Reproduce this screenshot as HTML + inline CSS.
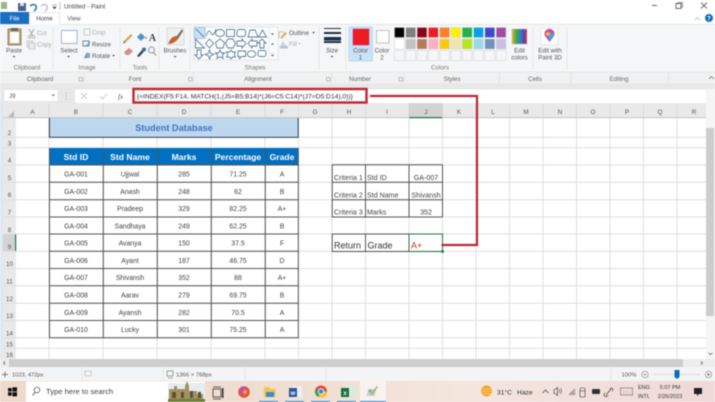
<!DOCTYPE html>
<html><head><meta charset="utf-8"><title>Untitled - Paint</title>
<style>
html,body{margin:0;padding:0;background:#fff;width:715px;height:402px;overflow:hidden}
svg{display:block;filter:blur(.4px)}
text{font-family:"Liberation Sans",sans-serif;fill:#555;font-size:6.200px}
.c{text-anchor:middle}
.h text,.h{font-size:6.300px;fill:#555;text-anchor:middle}
.d text{font-size:6.900px;fill:#444;text-anchor:middle}
.w text{font-size:8.600px;fill:#fff;font-weight:bold;text-anchor:middle}
.g line{stroke:#dedede;stroke-width:1}
.b line{stroke:#555;stroke-width:1}
.s *{fill:none;stroke:#5d7f9f;stroke-width:.9}
.k{fill:#444;font-size:7.100px}
</style></head><body>
<svg width="715" height="402" viewBox="0 0 715 402" xmlns="http://www.w3.org/2000/svg">
<rect width="715" height="402" fill="#fff"/>

<!-- title bar -->
<rect x="1" y="2" width="6" height="7" fill="#9ab88a"/>
<rect x="18" y="3" width="8" height="8" fill="#4a5f95"/><rect x="20" y="3" width="4" height="3" fill="#d8dfea"/>
<path d="M30 6 q4 -3 6 0 q1 3 -2 5" fill="none" stroke="#2f78b5" stroke-width="1.600"/>
<path d="M41 6 q4 -3 6 0 q1 3 -2 5" fill="none" stroke="#b8c3cc" stroke-width="1.400"/>
<path d="M52 5h5M52.500 7h4l-2 2z" fill="#444" stroke="#444" stroke-width=".4"/>
<line x1="60" y1="2" x2="60" y2="10" stroke="#999" stroke-width=".6"/>
<text x="64" y="8.500" style="font-size:6.300px;fill:#444">Untitled - Paint</text>
<line x1="652" y1="5.500" x2="657" y2="5.500" stroke="#444" stroke-width=".8"/>
<rect x="676" y="3.500" width="5" height="5" fill="none" stroke="#444" stroke-width=".8"/>
<path d="M678 3.500v-1h4.500v4.500h-1.500" fill="none" stroke="#444" stroke-width=".6"/>
<path d="M701 2.500l6 6M707 2.500l-6 6" stroke="#444" stroke-width=".8"/>
<path d="M695 20l2.500 -2.500l2.500 2.500" fill="none" stroke="#aaa" stroke-width=".7"/>
<circle cx="709" cy="18" r="4" fill="#0f6cbd"/><text x="709" y="20.300" class="c" style="font-size:6px;font-weight:bold;fill:#fff">?</text>

<!-- tabs -->
<rect x="0" y="12" width="29" height="12" fill="#1a6fc2"/>
<text x="14.500" y="20.500" class="c" style="fill:#fff;font-size:6.200px">File</text>
<text x="44.500" y="20.500" class="c" style="fill:#444;font-size:6.200px">Home</text>
<text x="74" y="20.500" class="c" style="fill:#555;font-size:6.200px">View</text>
<path d="M29.500 24V12.500H59.500V24" fill="none" stroke="#ddd" stroke-width=".7"/>

<!-- paint ribbon -->
<rect x="0" y="24" width="715" height="48" fill="#f5f6f7"/>
<line x1="0" y1="24.300" x2="29" y2="24.300" stroke="#ddd" stroke-width=".6"/><line x1="60" y1="24.300" x2="715" y2="24.300" stroke="#ddd" stroke-width=".6"/>
<g stroke="#e2e3e4" stroke-width=".8">
<line x1="53" y1="27" x2="53" y2="70"/><line x1="120" y1="27" x2="120" y2="70"/><line x1="159" y1="27" x2="159" y2="70"/><line x1="190" y1="27" x2="190" y2="70"/><line x1="319" y1="27" x2="319" y2="70"/><line x1="346" y1="27" x2="346" y2="70"/><line x1="533" y1="27" x2="533" y2="70"/><line x1="567" y1="27" x2="567" y2="70"/>
</g>
<!-- paste -->
<rect x="8" y="29" width="13" height="16" fill="#c8a878" stroke="#6e6252" stroke-width=".7"/>
<rect x="10" y="32" width="9" height="11" fill="#fff"/><rect x="11" y="28" width="7" height="3" fill="#666"/>
<text x="14" y="52.500" class="c">Paste</text><path d="M12.500 56h3l-1.500 1.500z" fill="#444"/>
<path d="M29 29l4 7M34 29l-4 7" stroke="#9aa" stroke-width=".9"/><circle cx="29.500" cy="37" r="1.300" fill="none" stroke="#9aa" stroke-width=".7"/><circle cx="33.500" cy="37" r="1.300" fill="none" stroke="#9aa" stroke-width=".7"/>
<text x="37" y="35" style="fill:#aaa">Cut</text>
<rect x="27" y="41" width="6" height="6" fill="#e8eaec" stroke="#b0b6bc" stroke-width=".6"/><rect x="29" y="43" width="6" height="6" fill="#e8eaec" stroke="#b0b6bc" stroke-width=".6"/>
<text x="37" y="46.500" style="fill:#aaa">Copy</text>
<text x="27" y="69.500" class="c" style="fill:#777">Clipboard</text>
<!-- image -->
<rect x="61.500" y="30.500" width="15.500" height="13" fill="#fff" stroke="#8fa3b5" stroke-width=".8"/>
<text x="69" y="52.500" class="c">Select</text><path d="M67 56h3l-1.500 1.500z" fill="#444"/>
<rect x="84" y="29" width="6" height="6" fill="none" stroke="#b6bcc2" stroke-width=".7"/>
<text x="92" y="34.500" style="fill:#aaa">Crop</text>
<rect x="83" y="41" width="6" height="5" fill="none" stroke="#3c6f9e" stroke-width=".8"/><path d="M86 46l4 -4" stroke="#3c6f9e" stroke-width=".7"/>
<text x="92" y="46.500" style="fill:#555">Resize</text>
<path d="M84 58l3 -6l3 6z" fill="#4a83b5"/><rect x="86" y="53" width="4" height="5" fill="#7aa8cc"/>
<text x="92" y="58" style="fill:#555">Rotate</text><path d="M112 55h3l-1.500 1.500z" fill="#444"/>
<text x="87" y="69.500" class="c" style="fill:#777">Image</text>
<!-- tools -->
<path d="M124 41l7 -7l1.500 1.500l-7 7z" fill="#d8a448"/><path d="M124 41l-1 2.500l2.500 -1z" fill="#555"/>
<path d="M137 37l4 -4l4 4l-4 4z" fill="#4b93c9"/><path d="M145 37l1 3l1 -3z" fill="#d77"/>
<text x="152.500" y="41" class="c" style="font-family:'Liberation Serif',serif;font-size:10px;font-weight:bold;fill:#444">A</text>
<path d="M124 52l5 -4l4 3l-4 4h-3z" fill="#d98a94"/>
<path d="M137 56l5 -6l2 1.500l-5 5.500z" fill="#345"/><circle cx="144" cy="49.500" r="2" fill="#3f6f9c"/>
<circle cx="151.500" cy="50" r="3" fill="none" stroke="#8a97a3" stroke-width=".9"/><path d="M153.500 52.500l2.500 3" stroke="#8a97a3" stroke-width="1"/>
<text x="140" y="69.500" class="c" style="fill:#777">Tools</text>
<!-- brushes -->
<rect x="167" y="28" width="17" height="17" fill="#eef0f2" stroke="#c8ccd0" stroke-width=".6"/>
<path d="M168 44q3 -8 9 -8l5 -7l1 2l-5 8q-4 5 -10 5z" fill="#c8622a"/><path d="M176 37l6 -7l1 1l-5 7z" fill="#6f6f6f"/>
<text x="175" y="52.500" class="c">Brushes</text><path d="M173.500 56h3l-1.500 1.500z" fill="#444"/>
<!-- shapes -->
<rect x="194" y="27" width="84" height="33" fill="#fbfcfc" stroke="#d5d9dc" stroke-width=".6"/>
<rect x="194.500" y="27.500" width="10.500" height="11" fill="#c9e0f7" stroke="#7eb2e4" stroke-width=".6"/>
<g class="s">
<path d="M196 29l8 8"/>
<path d="M206 36q3 -8 5 -3t5 -4"/>
<ellipse cx="220" cy="33" rx="4.500" ry="3.500"/>
<rect x="226.500" y="29.500" width="8" height="7"/>
<rect x="237" y="29.500" width="8.500" height="7" rx="2"/>
<path d="M248 37l2 -7h5l3 7z"/>
<path d="M258.500 37l4 -7l4 7z"/>
<path d="M195.500 39v9h9z"/>
<path d="M209.500 39l4 4.500l-4 4.500l-4 -4.500z"/>
<path d="M220 39l4.500 3.500l-1.500 5.500h-6l-1.500 -5.500z"/>
<path d="M228 39h5l2.500 4.500l-2.500 4.500h-5l-2.500 -4.500z"/>
<path d="M237 41h5v-2l4 4.500l-4 4.500v-2h-5z"/>
<path d="M257 41h-5v-2l-4 4.500l4 4.500v-2h5z"/>
<path d="M262 39l4 4h-2v5h-4v-5h-2z"/>
<path d="M199 59l-4 -4h2v-5h4v5h2z"/>
<path d="M209.500 50l1.200 3.300l3.300 1.200l-3.300 1.200l-1.200 3.300l-1.200 -3.300l-3.300 -1.200l3.300 -1.200z"/>
<path d="M220 50l1.400 3h3.300l-2.400 2.200l.8 3.300l-3.100 -1.700l-3.100 1.700l.8 -3.300l-2.400 -2.200h3.300z"/>
<path d="M231 50l1.500 2h3l-1.200 2.500l1.200 2.500h-3l-1.500 2l-1.500 -2h-3l1.200 -2.500l-1.200 -2.500h3z"/>
<path d="M238 51h7.500v5.500h-4l-2 2v-2h-1.500z"/>
<ellipse cx="251.500" cy="54" rx="4.200" ry="3.200"/>
<rect x="258" y="50.500" width="8" height="6" rx="2"/>
</g>
<line x1="269" y1="27.500" x2="269" y2="59.500" stroke="#dfe2e5" stroke-width=".6"/>
<path d="M271 33.500h3l-1.500 1.500zM271 44.500h3l-1.500 -1.500zM270.500 53.500h4M271 55h3l-1.500 1.500z" fill="#666" stroke="#666" stroke-width=".2"/>
<path d="M279 38v-6h5" fill="none" stroke="#a9b6c2" stroke-width=".7"/><path d="M280 38l5 -6l2 1.500l-5 5z" fill="#d9ad4f"/>
<text x="289" y="35" style="font-size:6.300px">Outline</text><path d="M312 32h3l-1.500 1.500z" fill="#444"/>
<path d="M280 47l3 -6l4 6z" fill="#c7d4e2"/><rect x="280" y="46" width="8" height="2.500" fill="#b4c4d6"/>
<text x="289" y="46" style="fill:#aaa">Fill</text><path d="M298 43h2.500l-1.250 1.200z" fill="#aaa"/>
<text x="255" y="69.500" class="c" style="fill:#777">Shapes</text>
<!-- size -->
<rect x="324" y="28" width="17" height="1" fill="#1e3147"/><rect x="324" y="32" width="17" height="2" fill="#1e3147"/><rect x="324" y="37" width="17" height="3.500" fill="#1e3147"/><rect x="324" y="41" width="17" height="2" fill="#1e3147"/>
<text x="332" y="52.500" class="c">Size</text><path d="M330.500 56h3l-1.500 1.500z" fill="#444"/>
<!-- colors -->
<rect x="349" y="27" width="23.500" height="34" fill="#cbe1f7" stroke="#a9cdef" stroke-width=".6"/>
<rect x="353" y="29" width="16" height="16" fill="#ed1c24" stroke="#a36" stroke-width=".5"/>
<text x="360.500" y="52.500" class="c">Color</text><text x="360.500" y="59.500" class="c">1</text>
<rect x="376.500" y="30.500" width="12.500" height="12.500" fill="#fff" stroke="#aaa" stroke-width=".7"/>
<text x="382" y="52.500" class="c">Color</text><text x="382" y="59.500" class="c">2</text>
<g stroke="#d0d0d0" stroke-width=".5">
<rect x="394.500" y="27.500" width="9.800" height="10" fill="#000"/><rect x="405.800" y="27.500" width="9.800" height="10" fill="#7f7f7f"/><rect x="417.100" y="27.500" width="9.800" height="10" fill="#880015"/><rect x="428.400" y="27.500" width="9.800" height="10" fill="#ed1c24"/><rect x="439.700" y="27.500" width="9.800" height="10" fill="#ff7f27"/><rect x="451" y="27.500" width="9.800" height="10" fill="#fff200"/><rect x="462.300" y="27.500" width="9.800" height="10" fill="#22b14c"/><rect x="473.600" y="27.500" width="9.800" height="10" fill="#00a2e8"/><rect x="484.900" y="27.500" width="9.800" height="10" fill="#3f48cc"/><rect x="496.200" y="27.500" width="9.800" height="10" fill="#a349a4"/>
<rect x="394.500" y="39" width="9.800" height="10" fill="#fff"/><rect x="405.800" y="39" width="9.800" height="10" fill="#c3c3c3"/><rect x="417.100" y="39" width="9.800" height="10" fill="#b97a57"/><rect x="428.400" y="39" width="9.800" height="10" fill="#ffaec9"/><rect x="439.700" y="39" width="9.800" height="10" fill="#ffc90e"/><rect x="451" y="39" width="9.800" height="10" fill="#efe4b0"/><rect x="462.300" y="39" width="9.800" height="10" fill="#b5e61d"/><rect x="473.600" y="39" width="9.800" height="10" fill="#99d9ea"/><rect x="484.900" y="39" width="9.800" height="10" fill="#7092be"/><rect x="496.200" y="39" width="9.800" height="10" fill="#c8bfe7"/>
<rect x="394.500" y="50.500" width="9.800" height="10" fill="#f5f6f7"/><rect x="405.800" y="50.500" width="9.800" height="10" fill="#f5f6f7"/><rect x="417.100" y="50.500" width="9.800" height="10" fill="#f5f6f7"/><rect x="428.400" y="50.500" width="9.800" height="10" fill="#f5f6f7"/><rect x="439.700" y="50.500" width="9.800" height="10" fill="#f5f6f7"/><rect x="451" y="50.500" width="9.800" height="10" fill="#f5f6f7"/><rect x="462.300" y="50.500" width="9.800" height="10" fill="#f5f6f7"/><rect x="473.600" y="50.500" width="9.800" height="10" fill="#f5f6f7"/><rect x="484.900" y="50.500" width="9.800" height="10" fill="#f5f6f7"/><rect x="496.200" y="50.500" width="9.800" height="10" fill="#f5f6f7"/>
</g>
<text x="440" y="69.500" class="c" style="fill:#777">Colors</text>
<defs><linearGradient id="rb" x1="0" x2="1"><stop offset="0" stop-color="#e8b32c"/><stop offset=".3" stop-color="#3da84a"/><stop offset=".6" stop-color="#2b7ccf"/><stop offset=".8" stop-color="#6a3ba8"/><stop offset="1" stop-color="#c9354a"/></linearGradient>
<linearGradient id="tb" x1="0" x2="1"><stop offset="0" stop-color="#eed9cc"/><stop offset=".45" stop-color="#f1dfd3"/><stop offset=".65" stop-color="#f4e6de"/><stop offset="1" stop-color="#f0d9d8"/></linearGradient></defs>
<rect x="512" y="29" width="15" height="15" fill="url(#rb)" stroke="#bbb" stroke-width=".6"/>
<text x="519.500" y="52.500" class="c">Edit</text><text x="519.500" y="59.500" class="c">colors</text>
<rect x="541" y="28" width="17" height="17" fill="#fff" stroke="#ddd" stroke-width=".6"/>
<path d="M549.500 42l-4.500 -6a5 5 0 1 1 9 0z" fill="#c34fa6"/><path d="M549.500 42l-1 -5a4 4 0 0 1 5 -4l.5 3z" fill="#4d9be0"/><circle cx="548" cy="34" r="2" fill="#f2b43c"/>
<text x="550" y="52.500" class="c">Edit with</text><text x="550" y="59.500" class="c">Paint 3D</text>
<line x1="0" y1="72" x2="715" y2="72" stroke="#dcdcdc" stroke-width=".7"/>

<!-- excel ribbon label row -->
<rect x="0" y="72.500" width="715" height="30.500" fill="#e8e8e8"/>
<rect x="0" y="72.500" width="715" height="11" fill="#f1f1f1"/>
<g stroke="#d8d8d8" stroke-width=".7"><line x1="84" y1="73" x2="84" y2="83"/><line x1="193.500" y1="73" x2="193.500" y2="83"/><line x1="331.500" y1="73" x2="331.500" y2="83"/><line x1="404" y1="73" x2="404" y2="83"/><line x1="499.500" y1="73" x2="499.500" y2="83"/><line x1="571" y1="73" x2="571" y2="83"/><line x1="668.500" y1="73" x2="668.500" y2="83"/></g>
<text x="40" y="81" class="c" style="fill:#666">Clipboard</text><text x="135" y="81" class="c" style="fill:#666">Font</text><text x="258" y="81" class="c" style="fill:#666">Alignment</text><text x="360" y="81" class="c" style="fill:#666">Number</text><text x="452" y="81" class="c" style="fill:#666">Styles</text><text x="535" y="81" class="c" style="fill:#666">Cells</text><text x="619" y="81" class="c" style="fill:#666">Editing</text>
<g fill="none" stroke="#888" stroke-width=".5"><path d="M79 77.500h3.500v3.500h-3.500zM188.500 77.500h3.500v3.500h-3.500zM326.500 77.500h3.500v3.500h-3.500zM399 77.500h3.500v3.500h-3.500z"/></g>
<path d="M709 79l2.500 -2.500l2.500 2.500" fill="none" stroke="#666" stroke-width=".7"/>

<!-- formula bar -->
<rect x="4" y="89.500" width="54" height="12" fill="#fff" stroke="#dadada" stroke-width=".5"/>
<text x="9" y="98" style="font-size:6.200px;fill:#555">J9</text><path d="M51.500 94.500h3.500l-1.750 1.800z" fill="#666"/>
<circle cx="66" cy="93" r=".5" fill="#999"/><circle cx="66" cy="96" r=".5" fill="#999"/><circle cx="66" cy="99" r=".5" fill="#999"/>
<rect x="75" y="89.500" width="631" height="13.500" fill="#fff"/>
<path d="M81 93l6 6M87 93l-6 6" stroke="#c2c2c2" stroke-width=".8"/><path d="M100 96.500l2.500 2.500l4.500 -5.500" fill="none" stroke="#c2c2c2" stroke-width=".8"/>
<text x="118" y="99" style="font-family:'Liberation Serif',serif;font-style:italic;font-size:7px;fill:#555">fx</text>
<text x="137" y="98.500" style="font-size:6.700px;fill:#333">{=INDEX(F5:F14, MATCH(1,(J5=B5:B14)*(J6=C5:C14)*(J7=D5:D14),0))}</text>

<!-- left strip + col header -->
<rect x="0" y="103" width="3" height="256" fill="#dfe7ef"/>
<rect x="3" y="103" width="703" height="15" fill="#e9e9e9"/>
<rect x="3" y="117.300" width="703" height=".8" fill="#b8b8b8"/>
<rect x="409" y="103" width="33.500" height="15" fill="#d3d3d3"/><rect x="409" y="117" width="33.500" height="1.200" fill="#217346"/>
<path d="M8 117l6 -6v6z" fill="#b9b9b9"/>
<rect x="3" y="118" width="13" height="241" fill="#e9e9e9"/>
<rect x="3" y="234" width="13" height="17.300" fill="#d3d3d3"/><rect x="15" y="234" width="1.200" height="17.300" fill="#217346"/>

<g class="h">
<text x="32.500" y="114">A</text><text x="76" y="114">B</text><text x="130" y="114">C</text><text x="184" y="114">D</text><text x="238" y="114">E</text><text x="282" y="114">F</text><text x="315" y="114">G</text><text x="349" y="114">H</text><text x="387" y="114">I</text><text x="426" y="114">J</text><text x="459" y="114">K</text><text x="493" y="114">L</text><text x="526" y="114">M</text><text x="560" y="114">N</text><text x="593" y="114">O</text><text x="627" y="114">P</text><text x="660" y="114">Q</text><text x="694" y="114">R</text>
<text x="9.500" y="135">2</text><text x="9.500" y="145.500">3</text><text x="9.500" y="162.500">4</text><text x="9.500" y="180">5</text><text x="9.500" y="197">6</text><text x="9.500" y="214.500">7</text><text x="9.500" y="232">8</text><text x="9.500" y="249">9</text><text x="9.500" y="266">10</text><text x="9.500" y="283.500">11</text><text x="9.500" y="301">12</text><text x="9.500" y="318">13</text><text x="9.500" y="335.500">14</text><text x="9.500" y="346.500">15</text><text x="9.500" y="357">16</text>
</g>
<g stroke="#cfcfcf" stroke-width=".6"><line x1="49" y1="104" x2="49" y2="118"/><line x1="103" y1="104" x2="103" y2="118"/><line x1="157" y1="104" x2="157" y2="118"/><line x1="211" y1="104" x2="211" y2="118"/><line x1="265" y1="104" x2="265" y2="118"/><line x1="298.500" y1="104" x2="298.500" y2="118"/><line x1="332" y1="104" x2="332" y2="118"/><line x1="365.500" y1="104" x2="365.500" y2="118"/><line x1="409" y1="104" x2="409" y2="118"/><line x1="442.500" y1="104" x2="442.500" y2="118"/><line x1="476" y1="104" x2="476" y2="118"/><line x1="509.500" y1="104" x2="509.500" y2="118"/><line x1="543" y1="104" x2="543" y2="118"/><line x1="576.500" y1="104" x2="576.500" y2="118"/><line x1="610" y1="104" x2="610" y2="118"/><line x1="643.500" y1="104" x2="643.500" y2="118"/><line x1="677" y1="104" x2="677" y2="118"/></g>

<!-- gridlines -->
<g class="g">
<line x1="49" y1="118" x2="49" y2="359"/><line x1="103" y1="118" x2="103" y2="359"/><line x1="157" y1="118" x2="157" y2="359"/><line x1="211" y1="118" x2="211" y2="359"/><line x1="265" y1="118" x2="265" y2="359"/><line x1="298.500" y1="118" x2="298.500" y2="359"/><line x1="332" y1="118" x2="332" y2="359"/><line x1="365.500" y1="118" x2="365.500" y2="359"/><line x1="409" y1="118" x2="409" y2="359"/><line x1="442.500" y1="118" x2="442.500" y2="359"/><line x1="476" y1="118" x2="476" y2="359"/><line x1="509.500" y1="118" x2="509.500" y2="359"/><line x1="543" y1="118" x2="543" y2="359"/><line x1="576.500" y1="118" x2="576.500" y2="359"/><line x1="610" y1="118" x2="610" y2="359"/><line x1="643.500" y1="118" x2="643.500" y2="359"/><line x1="677" y1="118" x2="677" y2="359"/>
<line x1="3" y1="137.300" x2="706" y2="137.300"/><line x1="3" y1="147.700" x2="706" y2="147.700"/><line x1="3" y1="165" x2="706" y2="165"/><line x1="3" y1="182.300" x2="706" y2="182.300"/><line x1="3" y1="199.700" x2="706" y2="199.700"/><line x1="3" y1="217" x2="706" y2="217"/><line x1="3" y1="234" x2="706" y2="234"/><line x1="3" y1="251.300" x2="706" y2="251.300"/><line x1="3" y1="268.500" x2="706" y2="268.500"/><line x1="3" y1="285.700" x2="706" y2="285.700"/><line x1="3" y1="303.200" x2="706" y2="303.200"/><line x1="3" y1="320.500" x2="706" y2="320.500"/><line x1="3" y1="337.700" x2="706" y2="337.700"/><line x1="3" y1="348.300" x2="706" y2="348.300"/>
</g>

<!-- title -->
<rect x="49" y="118" width="249.500" height="19.300" fill="#bdd7ee"/>
<path d="M49.400 118v19.300H298.200V118" fill="none" stroke="#1f2b3a" stroke-width=".9"/>
<text x="174" y="131" class="c" style="font-size:9.200px;font-weight:bold;fill:#4472c4">Student Database</text>

<!-- student table -->
<rect x="49" y="148" width="249.500" height="17" fill="#0070c0"/>
<g class="w"><text x="76" y="160">Std ID</text><text x="130" y="160">Std Name</text><text x="184" y="160">Marks</text><text x="238" y="160">Percentage</text><text x="282" y="160">Grade</text></g>
<g class="b">
<line x1="49.500" y1="148" x2="49.500" y2="338"/><line x1="103.300" y1="148" x2="103.300" y2="338"/><line x1="157.300" y1="148" x2="157.300" y2="338"/><line x1="211.300" y1="148" x2="211.300" y2="338"/><line x1="265.300" y1="148" x2="265.300" y2="338"/><line x1="298.300" y1="148" x2="298.300" y2="338"/>
<line x1="49" y1="165" x2="298.500" y2="165"/><line x1="49" y1="182.300" x2="298.500" y2="182.300"/><line x1="49" y1="199.700" x2="298.500" y2="199.700"/><line x1="49" y1="217" x2="298.500" y2="217"/><line x1="49" y1="234" x2="298.500" y2="234"/><line x1="49" y1="251.300" x2="298.500" y2="251.300"/><line x1="49" y1="268.500" x2="298.500" y2="268.500"/><line x1="49" y1="285.700" x2="298.500" y2="285.700"/><line x1="49" y1="303.200" x2="298.500" y2="303.200"/><line x1="49" y1="320.500" x2="298.500" y2="320.500"/><line x1="49" y1="337.700" x2="298.500" y2="337.700"/>
</g>
<g class="d">
<text x="76" y="176.500">GA-001</text><text x="130" y="176.500">Ujjwal</text><text x="184" y="176.500">285</text><text x="238" y="176.500">71.25</text><text x="282" y="176.500">A</text>
<text x="76" y="193.800">GA-002</text><text x="130" y="193.800">Anash</text><text x="184" y="193.800">248</text><text x="238" y="193.800">62</text><text x="282" y="193.800">B</text>
<text x="76" y="211">GA-003</text><text x="130" y="211">Pradeep</text><text x="184" y="211">329</text><text x="238" y="211">82.25</text><text x="282" y="211">A+</text>
<text x="76" y="228.500">GA-004</text><text x="130" y="228.500">Sandhaya</text><text x="184" y="228.500">249</text><text x="238" y="228.500">62.25</text><text x="282" y="228.500">B</text>
<text x="76" y="245.500">GA-005</text><text x="130" y="245.500">Avanya</text><text x="184" y="245.500">150</text><text x="238" y="245.500">37.5</text><text x="282" y="245.500">F</text>
<text x="76" y="262.800">GA-006</text><text x="130" y="262.800">Ayant</text><text x="184" y="262.800">187</text><text x="238" y="262.800">46.75</text><text x="282" y="262.800">D</text>
<text x="76" y="280">GA-007</text><text x="130" y="280">Shivansh</text><text x="184" y="280">352</text><text x="238" y="280">88</text><text x="282" y="280">A+</text>
<text x="76" y="297.300">GA-008</text><text x="130" y="297.300">Aarav</text><text x="184" y="297.300">279</text><text x="238" y="297.300">69.75</text><text x="282" y="297.300">B</text>
<text x="76" y="314.800">GA-009</text><text x="130" y="314.800">Ayansh</text><text x="184" y="314.800">282</text><text x="238" y="314.800">70.5</text><text x="282" y="314.800">A</text>
<text x="76" y="332">GA-010</text><text x="130" y="332">Lucky</text><text x="184" y="332">301</text><text x="238" y="332">75.25</text><text x="282" y="332">A</text>
</g>

<!-- criteria table -->
<g class="b">
<line x1="332.200" y1="164.700" x2="332.200" y2="217"/><line x1="365.500" y1="164.700" x2="365.500" y2="217"/><line x1="409" y1="164.700" x2="409" y2="217"/><line x1="442.500" y1="164.700" x2="442.500" y2="217"/>
<line x1="332" y1="164.800" x2="442.500" y2="164.800"/><line x1="332" y1="182.300" x2="442.500" y2="182.300"/><line x1="332" y1="199.700" x2="442.500" y2="199.700"/><line x1="332" y1="217" x2="442.500" y2="217"/>
<line x1="332.200" y1="234" x2="332.200" y2="251.500"/><line x1="365.500" y1="234" x2="365.500" y2="251.500"/><line x1="332" y1="234" x2="409" y2="234"/><line x1="332" y1="251.500" x2="409" y2="251.500"/>
</g>
<text x="334" y="180" class="k">Criteria 1</text><text x="367" y="180" class="k">Std ID</text><text x="426" y="180" class="k c">GA-007</text>
<text x="334" y="197.500" class="k">Criteria 2</text><text x="367" y="197.500" class="k">Std Name</text><text x="426" y="197.500" class="k c">Shivansh</text>
<text x="334" y="214.500" class="k">Criteria 3</text><text x="367" y="214.500" class="k">Marks</text><text x="426" y="214.500" class="k c">352</text>
<text x="334" y="248.500" style="fill:#333;font-size:9px">Return</text><text x="367.500" y="248.500" style="fill:#333;font-size:9px">Grade</text>
<text x="411" y="248.500" style="fill:#c0392b;font-size:9px">A+</text>
<rect x="409" y="234" width="33.500" height="17.500" fill="none" stroke="#217346" stroke-width="1"/>
<rect x="441.300" y="250.300" width="2.500" height="2.500" fill="#217346"/>

<!-- red annotation -->
<rect x="133.500" y="89" width="233" height="13.500" fill="none" stroke="#bf2633" stroke-width="2.400"/>
<path d="M370 96H477V245H441.500" fill="none" stroke="#bf2633" stroke-width="2.200"/>

<!-- right scrollbar -->
<rect x="706" y="89" width="9" height="270" fill="#f5f5f5"/>
<rect x="706" y="128" width="8" height="188" fill="#cdcdcd"/>
<path d="M708.500 353l2 1.500l2 -1.500" fill="none" stroke="#555" stroke-width=".7"/>

<!-- h scrollbar -->
<rect x="0" y="359" width="715" height="8" fill="#ececec"/>
<rect x="9" y="359" width="674" height="8" fill="#cecece"/>
<path d="M5 361.500l-1.500 1.500l1.500 1.500" fill="none" stroke="#444" stroke-width=".7"/><path d="M701 361.500l1.500 1.500l-1.500 1.500" fill="none" stroke="#444" stroke-width=".7"/>

<!-- status -->
<rect x="0" y="367" width="715" height="14" fill="#f3f4f5"/>
<g stroke="#e0e0e0" stroke-width=".7"><line x1="82" y1="368" x2="82" y2="381"/><line x1="163" y1="368" x2="163" y2="381"/><line x1="245" y1="368" x2="245" y2="381"/><line x1="326" y1="368" x2="326" y2="381"/><line x1="611" y1="368" x2="611" y2="381"/></g>
<path d="M2 374.500h6M5 371.500v6" stroke="#555" stroke-width=".7"/>
<text x="12" y="376.500" style="font-size:5.700px;fill:#555">1023, 472px</text>
<rect x="85" y="371" width="6" height="5" fill="none" stroke="#888" stroke-width=".6" stroke-dasharray="1 .6"/>
<rect x="167" y="371" width="6" height="5" fill="none" stroke="#777" stroke-width=".7"/><path d="M168 378h5" stroke="#777" stroke-width=".6"/>
<text x="176" y="376.500" style="font-size:5.900px;fill:#555">1366 × 768px</text>
<text x="629" y="376.500" class="c" style="font-size:5.900px;fill:#555">100%</text>
<circle cx="645" cy="374.500" r="3.200" fill="none" stroke="#888" stroke-width=".6"/><path d="M643.500 374.500h3" stroke="#666" stroke-width=".7"/>
<rect x="654" y="374" width="46" height="1" fill="#d8d8d8"/>
<path d="M674.500 370h5v7l-2.500 2l-2.500 -2z" fill="#0f6cbd"/>
<circle cx="708.500" cy="374.500" r="3.200" fill="none" stroke="#888" stroke-width=".6"/><path d="M707 374.500h3M708.500 373v3" stroke="#666" stroke-width=".7"/>

<!-- taskbar -->
<rect x="0" y="381" width="715" height="21" fill="url(#tb)"/>
<g fill="#111"><rect x="8" y="388" width="3.800" height="3.500"/><rect x="12.500" y="387.300" width="4.500" height="4.200"/><rect x="8" y="392.200" width="3.800" height="3.500"/><rect x="12.500" y="392.200" width="4.500" height="4.200"/></g>
<rect x="26" y="381.500" width="179" height="20.500" fill="#fff"/>
<circle cx="37" cy="390" r="2.800" fill="none" stroke="#444" stroke-width=".7"/><path d="M35 392.500l-2.500 3" stroke="#444" stroke-width=".8"/>
<text x="46" y="394" style="font-size:7.600px;fill:#444">Type here to search</text>
<rect x="168" y="383" width="37" height="19" fill="#e6edf2"/>
<path d="M169 402v-13h5v-3h3v3h8v-3l2 -5l2 5v5h8v3h6v8z" fill="#a59060"/><path d="M172 392h4v6h-4zM181 392h3v6h-3zM190 391h3v7h-3zM198 392h3v6h-3z" fill="#5c5138"/><rect x="168" y="399" width="37" height="3" fill="#6e7d38"/>
<rect x="213" y="389" width="8" height="8" fill="none" stroke="#333" stroke-width=".8"/><rect x="222" y="388" width="1.500" height="10" fill="#333"/><path d="M213 387h8M213 399h8" stroke="#333" stroke-width=".7"/>
<circle cx="244" cy="392" r="5.800" fill="#e8552f"/><path d="M240 388q5 -4 9 2q-2 -1 -4 0q2 4 -2 6q-5 -3 -3 -8z" fill="#c74fa0"/><circle cx="245" cy="392" r="2" fill="#f6a13b"/>
<path d="M264 387h5l1.500 2h5v8h-11.500z" fill="#f0c456"/><rect x="266" y="392" width="8" height="5" fill="#3c8cc4"/>
<rect x="292" y="386" width="10" height="12" fill="#eaf0f8"/><rect x="289" y="388" width="8" height="9" fill="#2b579a"/><text x="293" y="395" class="c" style="font-size:6px;font-weight:bold;fill:#fff">w</text>
<circle cx="321" cy="391.500" r="6" fill="#e04b3a"/><path d="M321 391.500l6 0a6 6 0 0 1 -9 5.200z" fill="#f3c22f"/><path d="M321 391.500l-3 5.200a6 6 0 0 1 -2.200 -8.200z" fill="#2fa04f"/><circle cx="321" cy="391.500" r="2.700" fill="#3d82d8" stroke="#fff" stroke-width=".9"/>
<rect x="345" y="386" width="10" height="12" fill="#d8ece0"/><rect x="341" y="388" width="8" height="9" fill="#1d6f42"/><text x="345" y="395" class="c" style="font-size:6px;font-weight:bold;fill:#fff">x</text>
<rect x="360" y="381" width="26" height="21" fill="#fff" opacity=".55"/>
<path d="M366 396l3 -7h7l-1 7z" fill="#c9d3c8"/><path d="M370 394l7 -8l1 1l-6 8z" fill="#a8b86a"/><circle cx="370" cy="391" r="1.500" fill="#7aa3c8"/>
<rect x="360" y="401" width="26" height="1" fill="#2a7ec0"/>
<g fill="#2a7ec0"><rect x="259" y="401" width="19" height="1"/><rect x="285" y="401" width="19" height="1"/><rect x="311" y="401" width="19" height="1"/><rect x="337" y="401" width="19" height="1"/></g>

<circle cx="486.500" cy="391" r="5.500" fill="#efa327"/><path d="M481.500 389h10M481 391.500h11M482 394h9" stroke="#f7d98b" stroke-width=".7"/>
<text x="497" y="394.300" style="font-size:6.700px;fill:#333">31°C</text><text x="517" y="394.300" style="font-size:6.700px;fill:#333">Haze</text>
<path d="M542.500 393l3 -3l3 3" fill="none" stroke="#333" stroke-width=".7"/>
<path d="M554 389.500h1.500l2 -2v8l-2 -2H554z" fill="none" stroke="#333" stroke-width=".6"/><path d="M559 389q1.500 2 0 4M560.500 388q2 3 0 6" fill="none" stroke="#333" stroke-width=".5"/>
<path d="M569 395l6 -6M571 395l4 -3.500M573 395l2.500 -1.500" fill="none" stroke="#555" stroke-width=".7"/>
<rect x="580" y="388" width="5" height="9" rx="1" fill="none" stroke="#333" stroke-width=".6"/><path d="M580 391h5" stroke="#333" stroke-width=".5"/>
<rect x="592" y="389" width="8" height="5" rx="1" fill="#333"/>
<path d="M606 395l5 -6M605 393a2 2 0 1 0 3 2M610 389a1.500 1.500 0 1 1 2 2" fill="none" stroke="#333" stroke-width=".7"/>
<rect x="620.500" y="388" width="12" height="7" fill="none" stroke="#666" stroke-width=".6"/><path d="M622.500 391h8M622.500 393h8" stroke="#999" stroke-width=".5" stroke-dasharray=".8 .6"/>
<text x="638" y="389" style="font-size:5.500px;fill:#333">ENG</text><text x="638" y="398" style="font-size:5.500px;fill:#333">INTL</text>
<text x="670" y="389" class="c" style="font-size:5.500px;fill:#333">5:07 PM</text><text x="670" y="398" class="c" style="font-size:5.500px;fill:#333">2/26/2023</text>
<path d="M694 388h8v6h-3l-2 2v-2h-3z" fill="#222"/>
</svg>
</body></html>
